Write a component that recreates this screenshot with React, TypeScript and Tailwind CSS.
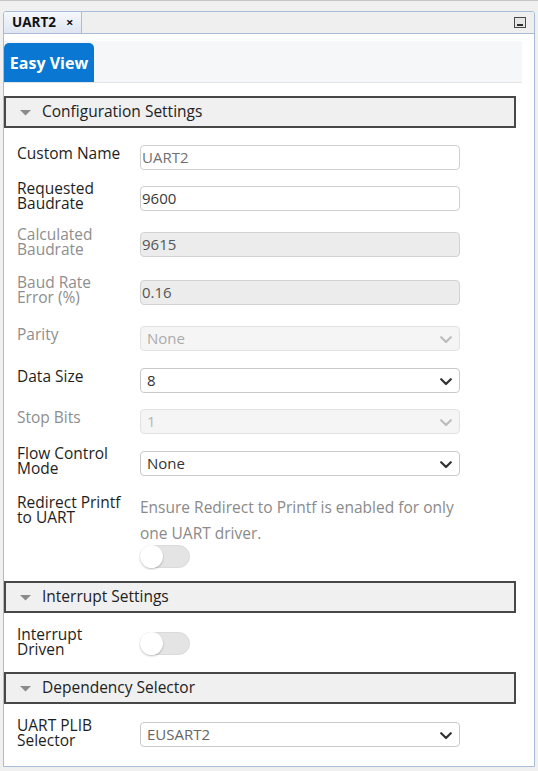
import React from 'react';

const font = { fontFamily: '"Open Sans", "Noto Sans", sans-serif' };

function Chevron({ disabled }: { disabled?: boolean }) {
  return (
    <svg width="12" height="8" viewBox="0 0 12 8" className="absolute right-[7px] top-[9px]">
      <polyline
        points="1.2,1.2 6,6 10.8,1.2"
        fill="none"
        stroke={disabled ? '#bdbdbd' : '#333333'}
        strokeWidth="2.2"
        strokeLinecap="round"
        strokeLinejoin="round"
      />
    </svg>
  );
}

function SectionHeader({ title, className = '' }: { title: string; className?: string }) {
  return (
    <div className={`mr-[18px] h-[32px] shrink-0 border-2 border-[#484848] bg-[#f0f0f0] flex items-center ${className}`}>
      <svg width="11" height="6" viewBox="0 0 11 6" className="ml-[14px] mt-[1px]">
        <polygon points="0,0 11,0 5.5,5.5" fill="#8a8a8a" />
      </svg>
      <span className="ml-[11px] text-[15.5px] text-[#222] leading-none">{title}</span>
    </div>
  );
}

function Toggle() {
  return (
    <div className="w-[50px] h-[23px] rounded-full bg-[#e4e4e4] border border-[#dadada] relative">
      <div className="absolute left-[-1px] top-[-1px] w-[23px] h-[23px] rounded-full bg-white shadow-[0_1px_2px_rgba(0,0,0,0.25)]" />
    </div>
  );
}

type Row = {
  label: React.ReactNode;
  twoLine?: boolean;
  disabledLabel?: boolean;
  kind: 'text' | 'readonly' | 'select' | 'select-disabled';
  value: string;
  valueColor: string;
  mt: string;
};

const rows: Row[] = [
  { label: 'Custom Name', kind: 'text', value: 'UART2', valueColor: 'text-[#707070]', mt: 'mt-[17px]' },
  { label: <>Requested<br />Baudrate</>, twoLine: true, kind: 'text', value: '9600', valueColor: 'text-[#3a3a3a]', mt: 'mt-[16px]' },
  { label: <>Calculated<br />Baudrate</>, twoLine: true, disabledLabel: true, kind: 'readonly', value: '9615', valueColor: 'text-[#555]', mt: 'mt-[21px]' },
  { label: <>Baud Rate<br />Error (%)</>, twoLine: true, disabledLabel: true, kind: 'readonly', value: '0.16', valueColor: 'text-[#555]', mt: 'mt-[23px]' },
  { label: 'Parity', disabledLabel: true, kind: 'select-disabled', value: 'None', valueColor: 'text-[#ababab]', mt: 'mt-[21px]' },
  { label: 'Data Size', kind: 'select', value: '8', valueColor: 'text-[#333]', mt: 'mt-[17px]' },
  { label: 'Stop Bits', disabledLabel: true, kind: 'select-disabled', value: '1', valueColor: 'text-[#b5b5b5]', mt: 'mt-[16px]' },
  { label: <>Flow Control<br />Mode</>, twoLine: true, kind: 'select', value: 'None', valueColor: 'text-[#333]', mt: 'mt-[17px]' },
];

function Field({ kind, value, valueColor }: { kind: Row['kind']; value: string; valueColor: string }) {
  const base = 'relative w-[320px] h-[25px] shrink-0 rounded-[4px] border flex items-center text-[15px]';
  if (kind === 'text')
    return <div className={`${base} bg-white border-[#cfcfcf] pl-[1px] ${valueColor}`}>{value}</div>;
  if (kind === 'readonly')
    return <div className={`${base} bg-[#ececec] border-[#d2d2d2] pl-[1px] ${valueColor}`}>{value}</div>;
  if (kind === 'select-disabled')
    return (
      <div className={`${base} bg-[#f5f5f5] border-[#e2e2e2] pl-[6px] ${valueColor}`}>
        {value}
        <Chevron disabled />
      </div>
    );
  return (
    <div className={`${base} bg-white border-[#cacaca] pl-[6px] ${valueColor}`}>
      {value}
      <Chevron />
    </div>
  );
}

export default function App() {
  return (
    <div style={font} className="w-[538px] h-[771px] bg-[#f0f0f0] border-t border-[#c6c6c6] pt-[10px] pl-[3px] pr-[3px] pb-[4px] flex flex-col overflow-hidden">
      <div className="flex-1 flex flex-col bg-white border border-[#a9bcd5] rounded-t-[3px] overflow-hidden">
        {/* document tab strip */}
        <div className="h-[21px] shrink-0 bg-[#efefef] border-b border-[#a9bcd5] flex items-stretch justify-between box-content">
          <div className="w-[78px] border-r border-[#a9bcd5] bg-gradient-to-b from-[#f5f8fc] to-[#dfe6f1] flex items-center pl-[8px] text-[13.5px] font-bold text-[#111]">
            <span>UART2</span>
            <span className="ml-[10px] text-[13px] leading-none">×</span>
          </div>
          <div className="mr-[8px] self-center w-[12px] h-[11px] border border-[#4a4a4a] bg-[#e6e6e6] flex items-end justify-center pb-[1px]">
            <div className="w-[6px] h-[2px] bg-[#2e2e2e]" />
          </div>
        </div>

        {/* view tabs */}
        <div className="mt-[7px] mr-[12px] h-[42px] shrink-0 bg-[#f6f7f9] border-b border-[#e3e4e6] pt-[2px] flex">
          <div className="w-[90px] h-[39px] bg-[#0a78d2] rounded-t-[5px] flex items-center justify-center text-white font-bold text-[16px]">
            Easy View
          </div>
        </div>

        <SectionHeader title="Configuration Settings" className="mt-[13px]" />

        <div className="pl-[13px]">
          {rows.map((r, i) => (
            <div key={i} className={`flex items-start ${r.mt}`}>
              <div
                className={`w-[123px] text-[15.5px] leading-[15px] ${r.twoLine ? '-mt-[5px]' : 'mt-[1px]'} ${
                  r.disabledLabel ? 'text-[#8e8e8e]' : 'text-[#1e1e1e]'
                }`}
              >
                {r.label}
              </div>
              <Field kind={r.kind} value={r.value} valueColor={r.valueColor} />
            </div>
          ))}

          <div className="flex items-start mt-[18px]">
            <div className="w-[123px] mt-[1px] text-[15.5px] leading-[15px] text-[#1e1e1e]">
              Redirect Printf
              <br />
              to UART
            </div>
            <div className="w-[330px]">
              <div className="text-[15.5px] leading-[26px] text-[#8a8a8a]">
                Ensure Redirect to Printf is enabled for only one UART driver.
              </div>
              <div className="-mt-[1px]">
                <Toggle />
              </div>
            </div>
          </div>
        </div>

        <SectionHeader title="Interrupt Settings" className="mt-[13px]" />

        <div className="pl-[13px] flex items-start mt-[19px]">
          <div className="w-[123px] -mt-[5px] text-[15.5px] leading-[15px] text-[#1e1e1e]">
            Interrupt
            <br />
            Driven
          </div>
          <Toggle />
        </div>

        <SectionHeader title="Dependency Selector" className="mt-[15px]" />

        <div className="pl-[13px] flex items-start mt-[18px]">
          <div className="w-[123px] -mt-[4px] text-[15.5px] leading-[15px] text-[#1e1e1e]">
            UART PLIB
            <br />
            Selector
          </div>
          <Field kind="select" value="EUSART2" valueColor="text-[#666]" />
        </div>
      </div>
    </div>
  );
}
